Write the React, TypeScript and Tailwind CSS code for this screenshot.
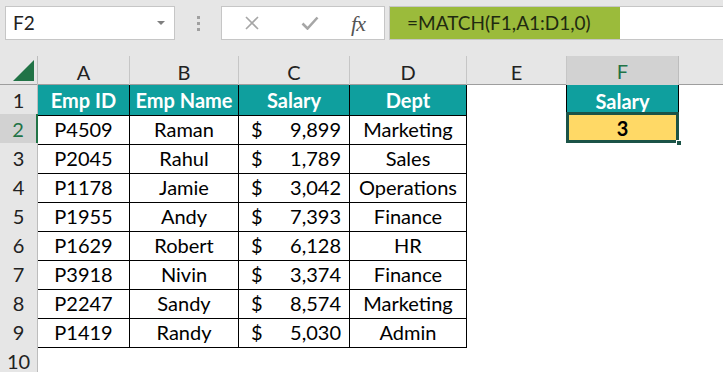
import React from "react";

const cols = ["A", "B", "C", "D", "E", "F"];

const rows = [
  ["P4509", "Raman", "9,899", "Marketing"],
  ["P2045", "Rahul", "1,789", "Sales"],
  ["P1178", "Jamie", "3,042", "Operations"],
  ["P1955", "Andy", "7,393", "Finance"],
  ["P1629", "Robert", "6,128", "HR"],
  ["P3918", "Nivin", "3,374", "Finance"],
  ["P2247", "Sandy", "8,574", "Marketing"],
  ["P1419", "Randy", "5,030", "Admin"],
];

const grid = "grid grid-cols-[38px_92px_109px_111px_117px_100px_112px_1fr]";

function RowHead({ n, active }: { n: number; active?: boolean }) {
  return (
    <div
      className={`flex items-center justify-center border-b border-[#d4d4d4] ${
        active
          ? "bg-[#d2d2d2] text-[#217346] border-r-2 border-r-[#217346]"
          : "bg-[#e6e6e6] text-[#222] border-r border-r-[#bdbdbd]"
      }`}
    >
      {n}
    </div>
  );
}

export default function App() {
  return (
    <div className="w-[723px] h-[372px] overflow-hidden bg-[#e6e6e6] font-['Lato','Liberation_Sans',sans-serif] text-[20px] text-black">
      {/* formula bar */}
      <div className="flex items-center h-[56px] pt-[6px] pb-[16px] pl-[5px]">
        <div className="relative w-[170px] h-[34px] bg-white border border-[#c6c6c6] flex items-center pl-[7px] text-[19px] text-[#222]">
          F2
          <span className="absolute right-[9px] top-[14px] w-0 h-0 border-l-[4px] border-r-[4px] border-t-[4px] border-l-transparent border-r-transparent border-t-[#7f7f7f]" />
        </div>
        <div className="w-[46px] flex flex-col items-center gap-[3px]">
          <span className="w-[3px] h-[3px] bg-[#a0a0a0]" />
          <span className="w-[3px] h-[3px] bg-[#a0a0a0]" />
          <span className="w-[3px] h-[3px] bg-[#a0a0a0]" />
        </div>
        <div className="w-[164px] h-[34px] bg-white border border-[#c6c6c6] flex items-center">
          <div className="w-[56px] flex justify-center ml-[2px]">
            <svg width="14" height="14" viewBox="0 0 14 14">
              <path d="M1 1L13 13M13 1L1 13" stroke="#a6a6a6" strokeWidth="1.6" fill="none" />
            </svg>
          </div>
          <div className="w-[60px] flex justify-center">
            <svg width="18" height="14" viewBox="0 0 18 14">
              <path d="M1.5 7.5L6.5 12.5L16.5 1.5" stroke="#a6a6a6" strokeWidth="2.6" fill="none" />
            </svg>
          </div>
          <div className="flex-1 flex justify-center pr-[8px] font-['Liberation_Serif',serif] italic text-[22px] text-[#555] tracking-[-1px]">
            fx
          </div>
        </div>
        <div className="ml-[4px] flex-1 h-[34px] bg-white border border-[#c6c6c6] border-r-0 flex">
          <div className="w-[230px] bg-[#9bbb3b] flex items-center pl-[17px] text-[19px] text-[#1f2a10]">
            =MATCH(F1,A1:D1,0)
          </div>
        </div>
      </div>

      {/* column headers */}
      <div className={`${grid} h-[29px] border-b border-[#9e9e9e]`}>
        <div className="relative border-r border-[#bdbdbd]">
          <svg className="absolute left-[13px] top-[4px]" width="22" height="22" viewBox="0 0 22 22">
            <path d="M0 21L21 0V21Z" fill="#217346" />
          </svg>
        </div>
        {cols.map((c) =>
          c === "F" ? (
            <div key={c} className="flex items-center justify-center bg-[#d2d2d2] text-[#217346] border-r border-[#bdbdbd] border-b-2 border-b-[#217346] mb-[-1px]">
              {c}
            </div>
          ) : (
            <div key={c} className="flex items-center justify-center text-[#222] border-r border-[#c6c6c6]">
              {c}
            </div>
          )
        )}
        <div />
      </div>

      {/* sheet */}
      <div className="bg-white">
        <div className={`${grid} h-[29px]`}>
          <RowHead n={1} />
          {["Emp ID", "Emp Name", "Salary", "Dept"].map((h) => (
            <div key={h} className="bg-[#0f9f9e] text-white font-bold flex items-center justify-center border-r border-b border-black">
              {h}
            </div>
          ))}
          <div />
          <div className="bg-[#0f9f9e] text-white font-bold flex items-center justify-center border-l border-r border-black -ml-px">
            Salary
          </div>
          <div />
        </div>

        {rows.map((r, i) => (
          <div key={i} className={`${grid} h-[29px]`}>
            <RowHead n={i + 2} active={i === 0} />
            <div className="flex items-center justify-center border-r border-b border-black">{r[0]}</div>
            <div className="flex items-center justify-center border-r border-b border-black">{r[1]}</div>
            <div className="flex items-center justify-between pl-[12px] pr-[8px] border-r border-b border-black">
              <span>$</span>
              <span>{r[2]}</span>
            </div>
            <div className="flex items-center justify-center border-r border-b border-black">{r[3]}</div>
            <div />
            {i === 0 ? (
              <div className="relative -ml-px mt-[-2px] h-[31px] bg-[#ffd966] border-[3px] border-[#1b5347] flex items-center justify-center font-bold">
                3
                <span className="absolute right-[-6px] bottom-[-6px] w-[6px] h-[6px] bg-[#1b5347] border border-white" />
              </div>
            ) : (
              <div />
            )}
            <div />
          </div>
        ))}

        <div className={`${grid} h-[29px]`}>
          <RowHead n={10} />
        </div>
      </div>
    </div>
  );
}
